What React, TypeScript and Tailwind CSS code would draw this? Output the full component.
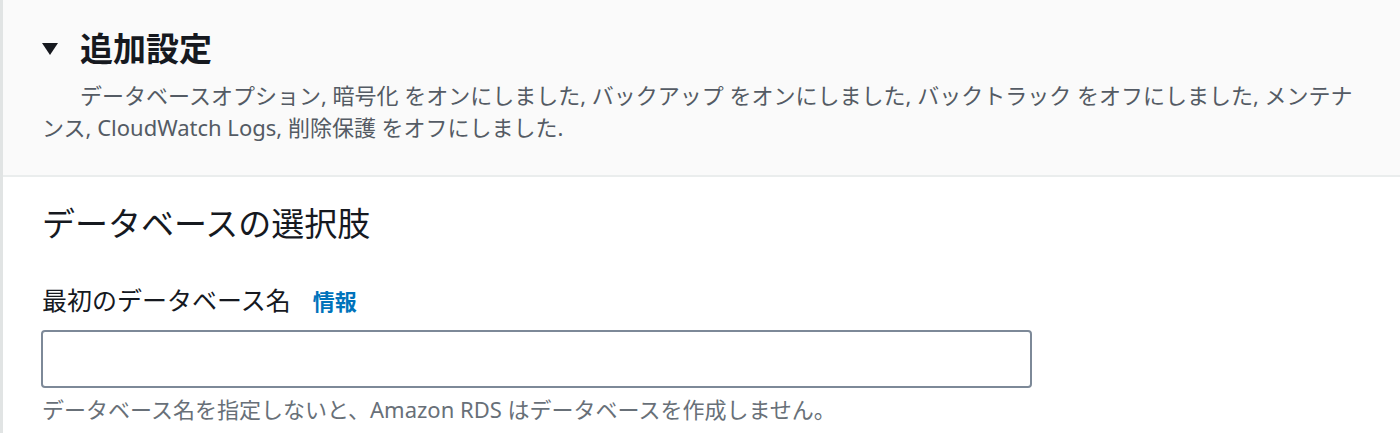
import React from "react"

const font = { fontFamily: '"Noto Sans", "Noto Sans CJK JP", sans-serif' }

export default function App() {
  return (
    <div className="w-[1400px] h-[433px] overflow-hidden bg-white border-l-[3px] border-[#e1e4e4]" style={font}>
      {/* expandable section header */}
      <div className="bg-[#fafafa] border-b-2 border-[#eaeded] pt-[29px] pb-[32px] pl-[39px] pr-[30px]">
        <div className="flex items-center h-[40px]">
          <svg width="16" height="12" viewBox="0 0 16 12" className="shrink-0">
            <polygon points="0,0 16,0 8,12" fill="#16191f" />
          </svg>
          <h2 className="ml-[22px] text-[33px] leading-[40px] font-bold text-[#16191f]">追加設定</h2>
        </div>
        <p className="mt-[10px] text-[22px] leading-[32px] text-[#545b64] indent-[38px]">
          データベースオプション, 暗号化 をオンにしました, バックアップ をオンにしました, バックトラック をオフにしました, メンテナンス, CloudWatch Logs, 削除保護 をオフにしました.
        </p>
      </div>

      {/* database options */}
      <div className="pt-[27px] pl-[39px]">
        <h3 className="text-[33px] leading-[40px] font-normal text-[#16191f]">データベースの選択肢</h3>
        <div className="mt-[40px] flex items-baseline">
          <label className="text-[25px] leading-[32px] text-[#16191f]">最初のデータベース名</label>
          <a className="ml-[22px] text-[22px] font-bold text-[#0073bb]">情報</a>
        </div>
        <input
          type="text"
          className="mt-[12px] block w-[991px] h-[58px] -ml-px border-2 border-[#7d8998] rounded-[4px] bg-white px-3 outline-none"
        />
        <p className="mt-[7px] text-[22px] leading-[28px] text-[#687078]">
          データベース名を指定しないと、Amazon RDS はデータベースを作成しません。
        </p>
      </div>
    </div>
  )
}
